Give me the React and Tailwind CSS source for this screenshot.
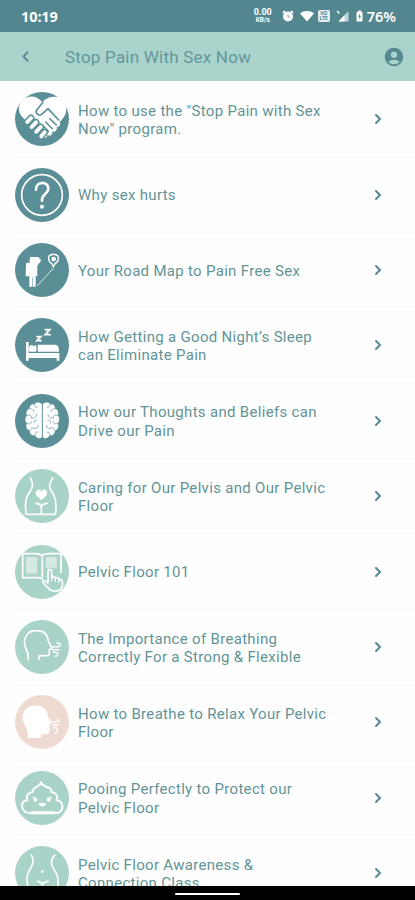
import React from "react";
import { MdAccountCircle } from "react-icons/md";
import { ChevronLeft, ChevronRight } from "lucide-react";

const TEAL = "#5b8f98";
const MINT = "#a9d2c9";
const BLUSH = "#efdad2";

// All topic icons share a 162 x 162 box, the circle fills it
function TopicIcon({ color, children }) {
  return (
    <svg
      viewBox="0 0 162 162"
      className="w-[54px] h-[54px] shrink-0"
      fill="none"
      stroke="#fff"
      strokeWidth="5"
      strokeLinecap="round"
      strokeLinejoin="round"
    >
      <circle cx="81" cy="81" r="81" fill={color} stroke="none" />
      {children}
    </svg>
  );
}

function Handshake() {
  const fingers = "M37 90L48 78M50 105L63 91M64 119L77 105M79 133L89 121";
  return (
    <TopicIcon color={TEAL}>
      <path
        d="M82 30C70 16 52 10 36 16C20 23 11 36 12 54C13 66 20 74 30 83L80 128C88 142 97 138 97 129C105 134 114 128 112 119C121 121 128 113 125 105C134 105 138 97 134 90C147 76 154 66 154 50C152 32 140 18 126 15C108 12 94 18 82 30Z"
        fill="#fff"
        stroke="none"
      />
      <g stroke={TEAL} strokeWidth="4.5">
        <path d="M84 31L65 54C60 63 71 73 80 67L99 50L131 84" strokeWidth="5" />
        <path d="M85 102L100 118M92 90L112 110M104 80L124 99" />
      </g>
      <path d={fingers} stroke={TEAL} strokeWidth="21" />
      <path d={fingers} strokeWidth="12" />
    </TopicIcon>
  );
}

function Question() {
  return (
    <TopicIcon color={TEAL}>
      <circle cx="81" cy="81" r="61" strokeWidth="5" />
      <path d="M63 65C62 39 101 38 100 63C99 77 82 78 81 94V98" strokeWidth="8" />
      <circle cx="81" cy="116" r="6" fill="#fff" stroke="none" />
    </TopicIcon>
  );
}

function RoadMap() {
  return (
    <TopicIcon color={TEAL}>
      <g fill="#fff" stroke="none">
        <circle cx="54" cy="52" r="10" />
        <path d="M45 42H70L75 48L70 60L62 65H45Z" />
        <path d="M33 66C33 60 37 58 43 59L67 61V99H62V131H43V100H32Z" />
      </g>
      <path d="M53 104V130" stroke={TEAL} strokeWidth="2" />
      <path d="M66 64L75 52" strokeWidth="6" />
      <path d="M68 127L114 77" strokeWidth="3" strokeDasharray="4 4" />
      <path d="M115 72L111 62C101 57 99 50 102 39C108 32 122 32 129 39C132 50 129 57 120 62Z" strokeWidth="4" />
      <circle cx="116" cy="48" r="7" fill="#fff" stroke="none" />
    </TopicIcon>
  );
}

function Bed() {
  return (
    <TopicIcon color={TEAL}>
      <path d="M37 72V128M36 116H130M129 105V128" strokeWidth="8" strokeLinecap="butt" />
      <path d="M36 105H132V113H36Z" fill="#fff" stroke="none" />
      <path d="M68 80H119C128 80 132 86 132 98V101H68Z" fill="#fff" stroke="none" />
      <path d="M44 83L51 81L56 84L63 82L65 92L63 101H43L41 92Z" fill="#fff" stroke="none" />
      <path d="M66 56H77L66 68H78M91 35H104L91 50H105" strokeWidth="5.5" strokeLinejoin="miter" />
    </TopicIcon>
  );
}

function BrainHalf() {
  return (
    <>
      <path
        d="M80.5 31C74 23 61 25 59 31C49 29 43 36 44 44C35 46 32 56 36 64C29 72 30 83 36 88C31 98 36 108 44 110C44 120 52 126 60 124C64 134 77 136 80.5 129Z"
        fill="#fff"
        stroke="none"
      />
      <g stroke={TEAL} strokeWidth="2">
        <path d="M59 31C58 37 62 41 67 40M44 45C51 43 56 47 56 53M36 65C44 59 51 65 49 72M49 72C58 74 65 69 65 61" />
        <path d="M36 88C43 92 49 88 50 83M66 80C60 76 56 81 58 87M44 110C46 102 53 99 59 103M59 103C67 105 70 99 69 94M60 123C59 117 63 113 68 114" />
      </g>
    </>
  );
}

function Brain() {
  return (
    <TopicIcon color={TEAL}>
      <BrainHalf />
      <g transform="translate(164 0) scale(-1 1)">
        <BrainHalf />
      </g>
    </TopicIcon>
  );
}

function Pelvis() {
  return (
    <TopicIcon color={MINT}>
      <path d="M46 27C60 52 48 61 37 80C30 95 30 113 34 136H121C125 113 124 95 117 80C106 61 96 52 113 27" />
      <path d="M79 94L65 80C55 67 72 54 79 67C87 54 103 67 94 80Z" fill="#fff" stroke="none" />
      <path d="M63 103C73 104 79 109 79 116V135M96 103C85 104 79 109 79 116" />
    </TopicIcon>
  );
}

function Book() {
  return (
    <TopicIcon color={MINT}>
      <path d="M81 31C73 25 65 26 55 26H23V98H70C77 98 81 101 82 103M82 31C89 25 98 26 108 26H138V82M82 31V96" />
      <path d="M33 36H67V86H33ZM92 36H125V70H92Z" fill="#fff" fillOpacity=".45" stroke="none" />
      <path d="M35 42H64M35 51H64M35 60H64M35 69H64M35 78H64M94 42H123M94 51H123M94 60H123" strokeWidth="1.5" strokeOpacity=".7" />
      <path
        d="M99 112V79C99 72 110 72 110 79V99C112 92 121 93 121 101C125 95 132 97 132 104C137 101 142 105 142 110V120C142 133 134 138 122 138H115C107 138 103 134 98 127L85 114C81 109 88 105 93 109L99 114"
        fill={MINT}
      />
      <path d="M110 98V106M121 101V108M132 104V111" strokeWidth="4" />
    </TopicIcon>
  );
}

function BreathHead() {
  return (
    <TopicIcon color={MINT}>
      <path d="M40 119C41 103 38 94 31 81C22 55 38 32 62 32C86 31 98 42 100 64L110 82C112 86 109 88 103 88V100C103 106 98 108 89 107L72 108" />
      <path d="M72 107V118" />
      <path d="M108 80H124C139 82 139 67 126 69M113 89H132M115 97H122C131 97 131 110 120 109" strokeWidth="4.5" />
    </TopicIcon>
  );
}

function BreathHeadSolid() {
  return (
    <TopicIcon color={BLUSH}>
      <path
        d="M38 129C40 108 35 101 28 88C15 61 29 34 57 32C85 30 98 47 99 65L109 80C111 84 109 86 104 87V105C104 116 96 119 79 118V129Z"
        fill="#fff"
        stroke="none"
      />
      <path d="M112 81H126C136 80 134 73 127 75M113 90H130M115 98H121C130 99 130 113 120 115" strokeWidth="4" />
    </TopicIcon>
  );
}

function Poo() {
  return (
    <TopicIcon color={MINT}>
      <path
        d="M78 34C78 47 53 45 53 63C39 64 32 75 37 88C24 88 18 101 22 111C26 122 35 127 49 127H117C135 127 144 117 142 105C141 94 134 88 124 88C131 76 124 65 110 63C110 54 105 50 96 49C89 44 80 42 78 34Z"
        strokeWidth="6"
      />
      <path d="M50 125H118" strokeWidth="8" />
      <path d="M54 79L65 83M108 79L98 83" strokeWidth="4" />
      <g fill="#fff" stroke="none">
        <circle cx="61" cy="86" r="6" />
        <circle cx="101" cy="86" r="6" />
        <path d="M71 97C77 95 86 95 93 97C91 110 73 110 71 97Z" />
      </g>
    </TopicIcon>
  );
}

function Torso() {
  return (
    <TopicIcon color={MINT}>
      <path d="M49 27C62 52 48 61 40 80C32 97 36 116 44 136M119 27C101 52 112 61 123 80C132 97 131 116 126 136" />
      <circle cx="82" cy="77" r="4" fill="#fff" stroke="none" />
      <path d="M68 106C77 107 82 111 82 119C82 111 89 107 99 106M82 117V132" />
    </TopicIcon>
  );
}

const topics = [
  { title: ["How to use the \"Stop Pain with Sex", "Now\" program."], icon: <Handshake /> },
  { title: ["Why sex hurts"], icon: <Question /> },
  { title: ["Your Road Map to Pain Free Sex"], icon: <RoadMap /> },
  { title: ["How Getting a Good Night’s Sleep", "can Eliminate Pain"], icon: <Bed /> },
  { title: ["How our Thoughts and Beliefs can", "Drive our Pain"], icon: <Brain /> },
  { title: ["Caring for Our Pelvis and Our Pelvic", "Floor"], icon: <Pelvis /> },
  { title: ["Pelvic Floor 101"], icon: <Book /> },
  { title: ["The Importance of Breathing", "Correctly For a Strong & Flexible"], icon: <BreathHead /> },
  { title: ["How to Breathe to Relax Your Pelvic", "Floor"], icon: <BreathHeadSolid /> },
  { title: ["Pooing Perfectly to Protect our", "Pelvic Floor"], icon: <Poo /> },
  { title: ["Pelvic Floor Awareness &", "Connection Class"], icon: <Torso /> },
];

function StatusBar() {
  return (
    <div className="h-8 shrink-0 bg-[#53868f] text-white flex items-center pl-[21px] pr-[19px] font-['Noto_Sans',sans-serif]">
      <span className="text-[14.5px] font-bold leading-none tracking-[-0.1px] pt-px">10:19</span>
      <div className="ml-auto flex items-center">
        <div className="w-5 flex flex-col items-center font-[Roboto,sans-serif] font-bold mr-[9px]">
          <span className="text-[9px] leading-[9px]">0.00</span>
          <span className="text-[6.5px] leading-[7px]">KB/s</span>
        </div>
        <svg viewBox="0 0 12 12" className="w-3 h-3 mr-[6px]">
          <circle cx="6" cy="6.4" r="5" fill="#fff" />
          <path d="M.8 2.8L3 .8M11.2 2.8L9 .8" stroke="#fff" strokeWidth="1.6" />
          <path d="M6 4V6.7L8 7.7" stroke="#53868f" strokeOpacity=".7" fill="none" />
        </svg>
        <svg viewBox="0 0 14 12" className="w-[14px] h-3 mr-1">
          <path d="M0 3.4C4 .2 10 .2 14 3.4L7 11.6Z" fill="#fff" />
        </svg>
        <div className="w-3 h-3 rounded-[2px] bg-white/85 text-[#53868f] text-[5px] font-bold leading-[5px] text-center pt-px mr-[6px]">
          <div>VO</div>
          <div>LTE</div>
        </div>
        <svg viewBox="0 0 13 12" className="w-[13px] h-3 mr-[7px]">
          <path d="M12.5 1V11.5H2.5Z" fill="#fff" fillOpacity=".65" />
          <path d="M8.5 5.2V11.5H2.5Z" fill="#fff" />
          <path d="M1 1L3.5 3.5" stroke="#fff" strokeWidth="1.5" />
        </svg>
        <svg viewBox="0 0 7 12" className="w-[7px] h-3 mr-1">
          <path d="M2 .5H5V2H6.5V11.5H.5V2H2Z" fill="#fff" />
          <path d="M3.9 3.5L2.2 7H3.4V9.7L5 6.3H3.9Z" fill="#53868f" />
        </svg>
        <span className="text-[14.5px] font-semibold leading-none pt-px">76%</span>
      </div>
    </div>
  );
}

export default function App() {
  return (
    <div className="w-[415px] h-[900px] flex flex-col overflow-hidden bg-[#fefefe] font-[Roboto,sans-serif] text-[#629496]">
      <StatusBar />

      <header className="h-[49px] shrink-0 bg-[#a9d3cb] text-[#568a90] flex items-center pl-[17px] pr-[10px]">
        <ChevronLeft size={17} strokeWidth={2.6} />
        <h1 className="ml-[31px] text-[17px] leading-none tracking-[0.22px] pt-px text-[#65979b]">
          Stop Pain With Sex Now
        </h1>
        <MdAccountCircle size={22} className="ml-auto" />
      </header>

      <main className="flex-1 min-h-0 overflow-hidden pt-px">
        {topics.map((topic) => (
          <div key={topic.title[0]} className="h-[75.4px] pl-[14.5px] flex flex-col">
            <div className="flex-1 flex items-center border-b border-[#f7f8f8]">
              {topic.icon}
              <div className="ml-[9.5px] text-[15px] leading-[18.4px] tracking-[0.31px] pt-[2px] whitespace-nowrap">
                {topic.title.map((line) => (
                  <div key={line}>{line}</div>
                ))}
              </div>
              <ChevronRight
                size={16}
                strokeWidth={3}
                className="ml-auto mr-[29px] text-[#568a90]"
              />
            </div>
          </div>
        ))}
      </main>

      {/* System navigation bar */}
      <div className="h-[14px] shrink-0 bg-black flex justify-center items-center pt-[2px]">
        <div className="w-[65px] h-[2px] rounded-full bg-white" />
      </div>
    </div>
  );
}
